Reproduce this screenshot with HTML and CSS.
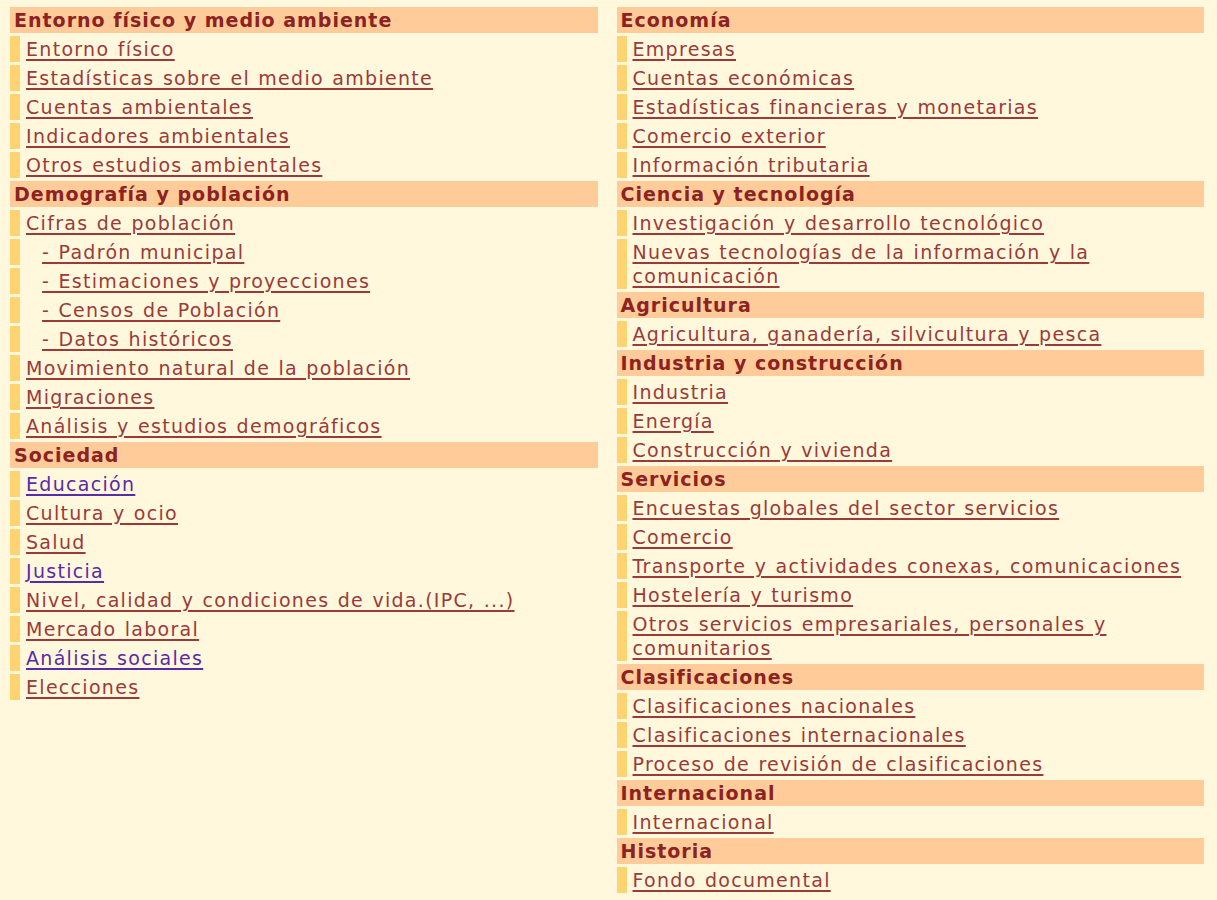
FILE: index.html
```html
<!DOCTYPE html>
<html lang="es">
<head>
<meta charset="utf-8">
<title>INEbase - Temas</title>
<link rel="stylesheet" href="styles.css">
</head>
<body>
<div class="page">
  <div class="col">
    <div class="sec">Entorno físico y medio ambiente</div>
    <div class="item"><a href="#">Entorno físico</a></div>
    <div class="item"><a href="#">Estadísticas sobre el medio ambiente</a></div>
    <div class="item"><a href="#">Cuentas ambientales</a></div>
    <div class="item"><a href="#">Indicadores ambientales</a></div>
    <div class="item"><a href="#">Otros estudios ambientales</a></div>
    <div class="sec">Demografía y población</div>
    <div class="item"><a href="#">Cifras de población</a></div>
    <div class="item sub"><a href="#">- Padrón municipal</a></div>
    <div class="item sub"><a href="#">- Estimaciones y proyecciones</a></div>
    <div class="item sub"><a href="#">- Censos de Población</a></div>
    <div class="item sub"><a href="#">- Datos históricos</a></div>
    <div class="item"><a href="#">Movimiento natural de la población</a></div>
    <div class="item"><a href="#">Migraciones</a></div>
    <div class="item"><a href="#">Análisis y estudios demográficos</a></div>
    <div class="sec">Sociedad</div>
    <div class="item"><a class="visited" href="#">Educación</a></div>
    <div class="item"><a href="#">Cultura y ocio</a></div>
    <div class="item"><a href="#">Salud</a></div>
    <div class="item"><a class="visited" href="#">Justicia</a></div>
    <div class="item"><a href="#">Nivel, calidad y condiciones de vida.(IPC, ...)</a></div>
    <div class="item"><a href="#">Mercado laboral</a></div>
    <div class="item"><a class="visited" href="#">Análisis sociales</a></div>
    <div class="item"><a href="#">Elecciones</a></div>
  </div>
  <div class="col">
    <div class="sec">Economía</div>
    <div class="item"><a href="#">Empresas</a></div>
    <div class="item"><a href="#">Cuentas económicas</a></div>
    <div class="item"><a href="#">Estadísticas financieras y monetarias</a></div>
    <div class="item"><a href="#">Comercio exterior</a></div>
    <div class="item"><a href="#">Información tributaria</a></div>
    <div class="sec">Ciencia y tecnología</div>
    <div class="item"><a href="#">Investigación y desarrollo tecnológico</a></div>
    <div class="item"><a href="#">Nuevas tecnologías de la información y la comunicación</a></div>
    <div class="sec">Agricultura</div>
    <div class="item"><a href="#">Agricultura, ganadería, silvicultura y pesca</a></div>
    <div class="sec">Industria y construcción</div>
    <div class="item"><a href="#">Industria</a></div>
    <div class="item"><a href="#">Energía</a></div>
    <div class="item"><a href="#">Construcción y vivienda</a></div>
    <div class="sec">Servicios</div>
    <div class="item"><a href="#">Encuestas globales del sector servicios</a></div>
    <div class="item"><a href="#">Comercio</a></div>
    <div class="item"><a href="#">Transporte y actividades conexas, comunicaciones</a></div>
    <div class="item"><a href="#">Hostelería y turismo</a></div>
    <div class="item"><a href="#">Otros servicios empresariales, personales y comunitarios</a></div>
    <div class="sec">Clasificaciones</div>
    <div class="item"><a href="#">Clasificaciones nacionales</a></div>
    <div class="item"><a href="#">Clasificaciones internacionales</a></div>
    <div class="item"><a href="#">Proceso de revisión de clasificaciones</a></div>
    <div class="sec">Internacional</div>
    <div class="item"><a href="#">Internacional</a></div>
    <div class="sec">Historia</div>
    <div class="item"><a href="#">Fondo documental</a></div>
  </div>
</div>
</body>
</html>
```

FILE: styles.css
```css
html, body {
  margin: 0;
  padding: 0;
  background: #fff8dc;
}
body {
  font-family: "DejaVu Sans", Verdana, sans-serif;
  font-size: 19px;
}
.page {
  display: flex;
  gap: 19px;
  padding: 7px 13px 0 10px;
}
.col {
  flex: 1 1 0;
  display: flex;
  flex-direction: column;
  gap: 3px;
}
.sec {
  background: #ffcb99;
  color: #8c2222;
  font-weight: bold;
  height: 26px;
  line-height: 26px;
  padding: 0 4px;
  letter-spacing: 1px;
}
.item {
  border-left: 10px solid #ffd470;
  padding: 1px 0 1px 6px;
  line-height: 24px;
  min-height: 24px;
  letter-spacing: 1.3px;
  word-spacing: 1px;
}
.item.sub {
  padding-left: 22px;
}
.item a {
  color: #9c3a3a;
  text-decoration: underline;
  text-decoration-thickness: 2px;
  text-underline-offset: 3px;
}
.item a.visited {
  color: #5b2aa6;
}
```
